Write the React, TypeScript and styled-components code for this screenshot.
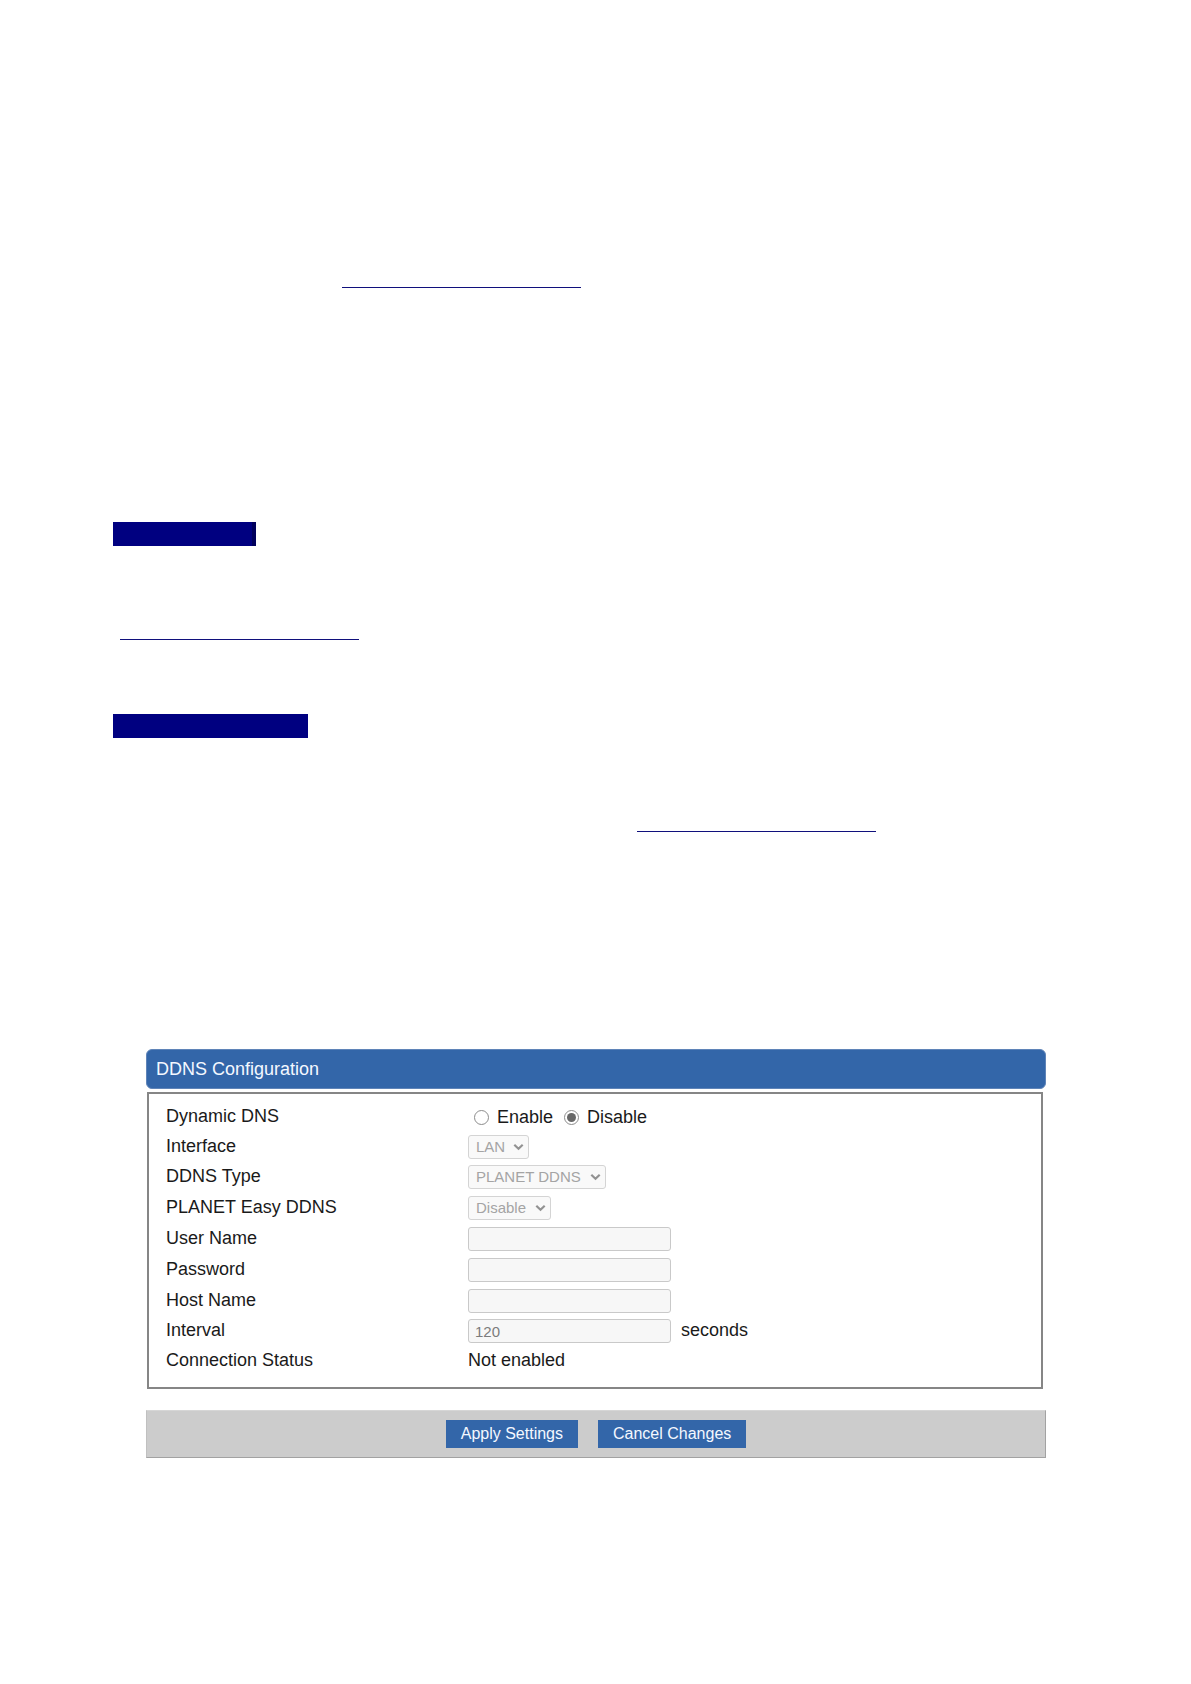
import { useState } from "react";
import type { ReactNode } from "react";
import styled, { createGlobalStyle } from "styled-components";

const GlobalStyle = createGlobalStyle`
  *, *::before, *::after { box-sizing: border-box; }
  body {
    margin: 0;
    background: #fff;
    color: #1a1a1a;
    font-family: "Liberation Sans", Arial, sans-serif;
    font-size: 18px;
    line-height: 22px;
  }
`;

const Page = styled.main`
  display: flex;
  flex-direction: column;
  padding: 0 113px 227px;
`;

const Passage = styled.section<{ $before: number; $after: number }>`
  display: flex;
  flex-direction: column;
  align-items: flex-start;
  gap: 93px;
  padding: ${(p) => p.$before}px 0 ${(p) => p.$after}px;
`;

const HeadingBar = styled.div<{ $width: number; $edge?: boolean }>`
  width: ${(p) => p.$width}px;
  height: 24px;
  background: #000080;
  border-right: ${(p) => (p.$edge ? "4px solid #00005c" : "none")};
`;

const RuleLink = styled.a<{ $indent: number }>`
  display: block;
  width: 239px;
  height: 1px;
  margin-left: ${(p) => p.$indent}px;
  background: #10107c;
`;

const Config = styled.form`
  display: flex;
  flex-direction: column;
  margin: 0 32px 0 33px;
`;

const Title = styled.h1`
  margin: 0 0 3px;
  padding: 8px 9px;
  border: 1px solid #5f84b8;
  border-radius: 6px;
  background: #3366a9;
  color: #f4f8ff;
  font-size: 18px;
  font-weight: 400;
  line-height: 22px;
`;

const Panel = styled.div`
  margin: 0 3px 21px 1px;
  padding: 11px 17px 16px;
  border: 2px solid #868686;
`;

const Row = styled.div<{ $height: number }>`
  display: grid;
  grid-template-columns: 302px 1fr;
  align-items: start;
  height: ${(p) => p.$height}px;
`;

const Field = styled.div`
  display: flex;
  align-items: flex-start;
  gap: 10px;
`;

const RadioGroup = styled.div`
  display: flex;
  gap: 11px;
  padding: 1px 0 0 6px;
`;

const RadioLabel = styled.label`
  display: flex;
  align-items: center;
  gap: 8px;
`;

const Radio = styled.input`
  appearance: none;
  display: grid;
  place-items: center;
  width: 15px;
  height: 15px;
  margin: 0;
  border: 1px solid #8c8c8c;
  border-radius: 50%;
  background: #fff;

  &:checked::before {
    content: "";
    width: 9px;
    height: 9px;
    border-radius: 50%;
    background: #686868;
  }
`;

const SelectBox = styled.div<{ $width: number }>`
  position: relative;
  width: ${(p) => p.$width}px;
  height: 24px;
`;

const Select = styled.select`
  appearance: none;
  width: 100%;
  height: 24px;
  padding: 0 22px 0 7px;
  border: 1px solid #d4d4d4;
  border-radius: 3px;
  background: #f9f9f9;
  color: #222;
  font: 15px/22px "Liberation Sans", Arial, sans-serif;

  &:disabled { color: #a4a4a4; opacity: 1; }
`;

const Arrow = styled.svg`
  position: absolute;
  top: 8px;
  right: 5px;
  width: 11px;
  height: 8px;
  pointer-events: none;
`;

const TextInput = styled.input`
  width: 203px;
  height: 24px;
  padding: 0 6px;
  border: 1px solid #c9c9c9;
  border-radius: 3px;
  background: #f7f7f7;
  color: #222;
  font: 15px/22px "Liberation Sans", Arial, sans-serif;

  &:disabled { color: #7c7c7c; }
`;

const Toolbar = styled.div`
  display: flex;
  justify-content: center;
  align-items: center;
  gap: 20px;
  height: 48px;
  border: 1px solid #a2a2a2;
  border-top-color: #d6d6d6;
  border-left-color: #c0c0c0;
  background: #cccccc;
`;

const Button = styled.button`
  height: 28px;
  padding: 0 15px;
  border: 0;
  background: #3366a9;
  color: #f4f8ff;
  font: 16px/28px "Liberation Sans", Arial, sans-serif;
`;

function SelectField(props: { id: string; width: number; options: string[]; disabled: boolean }) {
  return (
    <SelectBox $width={props.width}>
      <Select id={props.id} disabled={props.disabled}>
        {props.options.map((o) => (
          <option key={o}>{o}</option>
        ))}
      </Select>
      <Arrow viewBox="0 0 11 8" aria-hidden="true">
        <path d="M1.3 1.8 5.5 5.8 9.7 1.8" fill="none" stroke="#929292" strokeWidth="2.2" />
      </Arrow>
    </SelectBox>
  );
}

function LabelledRow(props: { id: string; label: string; height: number; children: ReactNode }) {
  return (
    <Row $height={props.height}>
      <label htmlFor={props.id}>{props.label}</label>
      <Field>{props.children}</Field>
    </Row>
  );
}

export default function App() {
  const [enabled, setEnabled] = useState(false);
  const off = !enabled;

  return (
    <>
      <GlobalStyle />
      <Page>
        <Passage $before={287} $after={234}>
          <RuleLink href="#ddns" aria-label="DDNS service" $indent={229} />
        </Passage>
        <Passage $before={0} $after={74}>
          <HeadingBar $width={143} $edge />
          <RuleLink href="#ddns" aria-label="DDNS service" $indent={7} />
        </Passage>
        <Passage $before={0} $after={217}>
          <HeadingBar $width={195} />
          <RuleLink href="#ddns" aria-label="DDNS service" $indent={524} />
        </Passage>

        <Config id="ddns" onSubmit={(e) => e.preventDefault()} onReset={() => setEnabled(false)}>
          <Title>DDNS Configuration</Title>
          <Panel>
            <Row $height={30}>
              <span id="dynamic-dns">Dynamic DNS</span>
              <RadioGroup role="radiogroup" aria-labelledby="dynamic-dns">
                <RadioLabel>
                  <Radio type="radio" name="ddns" checked={enabled} onChange={() => setEnabled(true)} />
                  Enable
                </RadioLabel>
                <RadioLabel>
                  <Radio type="radio" name="ddns" checked={off} onChange={() => setEnabled(false)} />
                  Disable
                </RadioLabel>
              </RadioGroup>
            </Row>
            <LabelledRow id="interface" label="Interface" height={30}>
              <SelectField id="interface" width={61} options={["LAN"]} disabled={off} />
            </LabelledRow>
            <LabelledRow id="type" label="DDNS Type" height={31}>
              <SelectField id="type" width={138} options={["PLANET DDNS"]} disabled={off} />
            </LabelledRow>
            <LabelledRow id="easy" label="PLANET Easy DDNS" height={31}>
              <SelectField id="easy" width={83} options={["Disable", "Enable"]} disabled={off} />
            </LabelledRow>
            <LabelledRow id="user" label="User Name" height={31}>
              <TextInput id="user" type="text" disabled={off} />
            </LabelledRow>
            <LabelledRow id="password" label="Password" height={31}>
              <TextInput id="password" type="password" disabled={off} />
            </LabelledRow>
            <LabelledRow id="host" label="Host Name" height={30}>
              <TextInput id="host" type="text" disabled={off} />
            </LabelledRow>
            <LabelledRow id="interval" label="Interval" height={30}>
              <TextInput id="interval" type="text" defaultValue="120" disabled={off} />
              <span>seconds</span>
            </LabelledRow>
            <Row $height={22}>
              <span>Connection Status</span>
              <span>Not enabled</span>
            </Row>
          </Panel>
          <Toolbar>
            <Button type="submit">Apply Settings</Button>
            <Button type="reset">Cancel Changes</Button>
          </Toolbar>
        </Config>
      </Page>
    </>
  );
}
